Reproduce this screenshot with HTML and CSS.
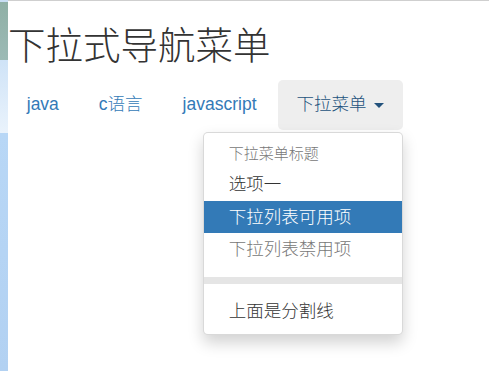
FILE: index.html
```html
<!DOCTYPE html>
<html lang="zh-CN">
<head>
<meta charset="utf-8">
<title>下拉式导航菜单</title>
<link rel="stylesheet" href="styles.css">
</head>
<body>
  <h1 class="title">下拉式导航菜单</h1>
  <ul class="nav-pills">
    <li class="nav-item"><a class="nav-link" href="#">java</a></li>
    <li class="nav-item"><a class="nav-link" href="#">c语言</a></li>
    <li class="nav-item"><a class="nav-link" href="#">javascript</a></li>
    <li class="nav-item dropdown open">
      <a class="nav-link" href="#">下拉菜单 <span class="caret"></span></a>
      <ul class="dropdown-menu">
        <li class="dropdown-header">下拉菜单标题</li>
        <li><a class="menu-link" href="#">选项一</a></li>
        <li class="active"><a class="menu-link" href="#">下拉列表可用项</a></li>
        <li class="disabled"><a class="menu-link" href="#">下拉列表禁用项</a></li>
        <li class="divider"></li>
        <li><a class="menu-link" href="#">上面是分割线</a></li>
      </ul>
    </li>
  </ul>
</body>
</html>
```
FILE: styles.css
```css
* { box-sizing: border-box; }

html {
  height: 100%;
  background-color: #fff;
  background-image: linear-gradient(to bottom,
    #c8def4 0, #c8def4 2px,
    #8fb0a6 2px, #9cbab5 60px,
    #cfe3f7 60px, #eaf3fc 133px,
    #b8d7f6 133px, #b2d1f2 371px);
  background-size: 8px 100%;
  background-repeat: no-repeat;
}

body {
  margin: 0 0 0 8px;
  min-height: 100%;
  background: #fff;
  border-top: 1px solid #cfcfcf;
  font-family: "Liberation Sans", Arial, "Noto Sans CJK SC", sans-serif;
  font-size: 17.5px;
  line-height: 25px;
  font-weight: 300;
  color: #333;
}

.title {
  margin: 25px 0 12.5px;
  font-size: 37.5px;
  line-height: 41.25px;
  font-weight: 300;
  color: #333;
}

.nav-pills {
  display: flex;
  list-style: none;
  margin: 0;
  padding: 0;
}

.nav-item { position: relative; }
.nav-item + .nav-item { margin-left: 2.5px; }

.nav-link {
  display: block;
  padding: 12.5px 18.75px;
  line-height: 25px;
  font-size: 17.5px;
  color: #337ab7;
  text-decoration: none;
  border-radius: 5px;
}

.open > .nav-link {
  background: #eee;
  color: #23527c;
}

.caret {
  display: inline-block;
  width: 0;
  height: 0;
  margin-left: 2.5px;
  vertical-align: middle;
  border-top: 5px solid;
  border-left: 5px solid transparent;
  border-right: 5px solid transparent;
}

.dropdown-menu {
  position: absolute;
  top: 100%;
  right: 0;
  margin: 2.5px 0 0;
  min-width: 200px;
  padding: 6.25px 0;
  list-style: none;
  background: #fff;
  border: 1.25px solid rgba(0,0,0,.15);
  border-radius: 5px;
  box-shadow: 0 7.5px 15px rgba(0,0,0,.175);
}

.dropdown-header {
  padding: 3.75px 25px;
  font-size: 15px;
  line-height: 21.43px;
  color: #777;
  white-space: nowrap;
}

.menu-link {
  display: block;
  padding: 3.75px 25px;
  line-height: 25px;
  font-size: 17.5px;
  color: #333;
  text-decoration: none;
  white-space: nowrap;
}

.active > .menu-link {
  background: #337ab7;
  color: #fff;
}

.disabled > .menu-link { color: #777; }

.divider {
  height: 7px;
  margin: 11.25px 0;
  background: #e5e5e5;
}
```
